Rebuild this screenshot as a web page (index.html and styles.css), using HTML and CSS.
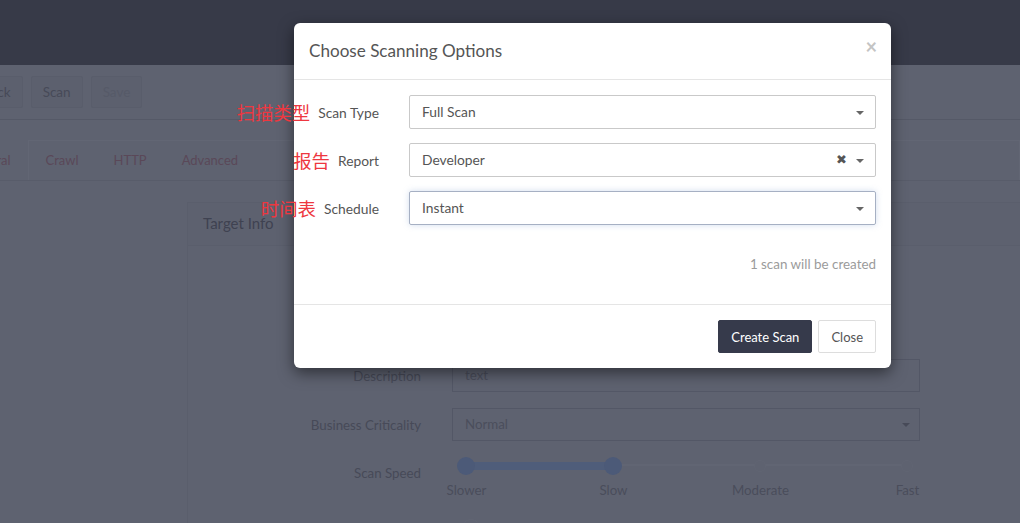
FILE: index.html
```html
<!DOCTYPE html>
<html>
<head>
<meta charset="utf-8">
<link rel="stylesheet" href="styles.css">
</head>
<body>
<div class="page">
  <header class="topbar"></header>
  <div class="toolbar">
    <button class="tb-btn back">Back</button>
    <button class="tb-btn">Scan</button>
    <button class="tb-btn muted">Save</button>
  </div>
  <div class="tabs-row">
    <span class="tab first">General</span>
    <div class="tabs-box">
      <span class="tab">Crawl</span>
      <span class="tab">HTTP</span>
      <span class="tab">Advanced</span>
    </div>
  </div>
  <div class="content">
    <div class="panel">
      <div class="panel-head">Target Info</div>
      <div class="panel-body">
        <div class="frow">
          <label class="flabel">Description</label>
          <div class="finput">text</div>
        </div>
        <div class="frow">
          <label class="flabel">Business Criticality</label>
          <div class="finput fselect">Normal<span class="caret dim"></span></div>
        </div>
        <div class="frow top">
          <label class="flabel pad">Scan Speed</label>
          <div class="slider">
            <div class="track">
              <div class="track-line"></div>
              <div class="track-fill"></div>
              <span class="knob k1"></span>
              <span class="knob k2"></span>
              <span class="tick t3"></span>
              <span class="tick t4"></span>
            </div>
            <div class="slider-labels">
              <span>Slower</span><span>Slow</span><span>Moderate</span><span>Fast</span>
            </div>
          </div>
        </div>
        <div class="frow">
          <label class="flabel"></label>
          <div class="toggle"></div>
        </div>
      </div>
    </div>
  </div>
</div>

<div class="modal">
  <div class="modal-head">
    <span class="modal-title">Choose Scanning Options</span>
    <span class="modal-close">×</span>
  </div>
  <div class="modal-body">
    <div class="mrow">
      <label class="mlabel"><span class="note">扫描类型</span>Scan Type</label>
      <div class="select">Full Scan<span class="caret"></span></div>
    </div>
    <div class="mrow">
      <label class="mlabel"><span class="note">报告</span>Report</label>
      <div class="select">Developer<span class="clear">✖</span><span class="caret"></span></div>
    </div>
    <div class="mrow">
      <label class="mlabel"><span class="note">时间表</span>Schedule</label>
      <div class="select focus">Instant<span class="caret"></span></div>
    </div>
    <div class="info">1 scan will be created</div>
  </div>
  <div class="modal-foot">
    <button class="btn primary">Create Scan</button>
    <button class="btn plain">Close</button>
  </div>
</div>
</body>
</html>
```

FILE: styles.css
```css
* { box-sizing: border-box; }
html, body { margin: 0; padding: 0; }
body {
  width: 1020px;
  height: 523px;
  overflow: hidden;
  background: #5e6270;
  font-family: Lato, "Noto Sans CJK SC", sans-serif;
  font-size: 13px;
  position: relative;
}
.page { width: 1020px; }
.topbar { height: 65px; background: #373a48; }

.toolbar {
  height: 55px;
  display: flex;
  align-items: center;
  gap: 8px;
  border-bottom: 1px solid #555967;
  padding-bottom: 1px;
}
.tb-btn {
  height: 32px;
  padding: 0 11px;
  background: #5c606e;
  border: 1px solid #595d6b;
  border-radius: 2px;
  color: #474a58;
  font-family: Lato, sans-serif;
  font-size: 13.5px;
}
.tb-btn.back { margin-left: -30px; }
.tb-btn.muted { color: #565a68; }

.tabs-row {
  height: 61px;
  display: flex;
  align-items: flex-end;
  border-bottom: 1px solid #585c6a;
}
.tab {
  display: inline-block;
  height: 40px;
  line-height: 40px;
  padding: 0 17px;
  color: #5a4858;
  font-size: 13px;
}
.tab.first { margin-left: -51px; }
.tabs-box {
  display: flex;
  border-color: #626674;
  border-style: solid;
  border-width: 1px 1px 0 1px;
  flex: 1;
  height: 40px;
}
.tabs-box .tab { height: 39px; line-height: 39px; }
.tabs-box .tab + .tab { margin-left: 1px; }

.content { padding: 21px 0 0 187px; }
.panel {
  width: 880px;
  border: 1px solid #5a5e6c;
}
.panel-head {
  height: 43px;
  line-height: 41px;
  padding: 0 15px;
  font-size: 15px;
  color: #3f4251;
  border-bottom: 1px solid #5a5e6c;
  background: #5d616f;
}
.panel-body { padding-top: 113px; }
.frow {
  display: grid;
  grid-template-columns: 233px 468px;
  column-gap: 31px;
  align-items: center;
  margin-bottom: 16px;
}
.frow.top { align-items: start; margin-bottom: 21px; }
.flabel { text-align: right; color: #474a58; font-size: 13.3px; }
.flabel.pad { padding-top: 8px; line-height: 16px; }
.finput {
  height: 33px;
  line-height: 31px;
  border: 1px solid #535766;
  padding: 0 12px;
  color: #4b4e5c;
  font-size: 13.3px;
  position: relative;
}
.caret {
  position: absolute;
  right: 9px;
  top: 14px;
  width: 0; height: 0;
  border-left: 4px solid transparent;
  border-right: 4px solid transparent;
  border-top: 4px solid #666;
}
.caret.dim { border-top-color: #474a58; }

.slider { width: 468px; }
.track { position: relative; height: 18px; }
.track-line {
  position: absolute;
  left: 14px; right: 13px; top: 7px;
  height: 2px;
  background: #616573;
}
.track-fill {
  position: absolute;
  left: 14px; width: 147px; top: 5px;
  height: 8px;
  background: #4f5d7a;
}
.knob {
  position: absolute;
  top: 0;
  width: 18px; height: 18px;
  border-radius: 50%;
  background: #4c5a78;
}
.k1 { left: 5px; }
.k2 { left: 152px; }
.tick {
  position: absolute;
  top: 3px;
  width: 12px; height: 12px;
  border-radius: 50%;
  border: 1px solid #616573;
  background: #5e6270;
}
.t3 { left: 302px; }
.t4 { left: 449px; }
.slider-labels {
  display: grid;
  grid-template-columns: repeat(4, 147px);
  margin-left: -59px;
  margin-top: 7px;
  line-height: 16px;
  color: #4a4d5b;
  font-size: 13.3px;
  text-align: center;
}
.toggle {
  width: 20px; height: 20px;
  border-radius: 50%;
  margin-left: 9px;
  border: 1px solid #616573;
}

/* modal */
.modal {
  position: absolute;
  left: 294px;
  top: 23px;
  width: 597px;
  background: #fff;
  border-radius: 6px;
  box-shadow: 0 5px 15px rgba(0, 0, 0, 0.5);
}
.modal-head {
  height: 57px;
  padding: 15px 15px 0 15px;
  border-bottom: 1px solid #e5e5e5;
  display: flex;
  justify-content: space-between;
  align-items: flex-start;
}
.modal-title {
  font-size: 17.1px;
  line-height: 25px;
  color: #555;
}
.modal-close {
  font-size: 20px;
  font-weight: bold;
  line-height: 20px;
  color: #c4c4c4;
  margin-top: -2px;
  margin-right: -1px;
}
.modal-body { padding: 15px 15px; }
.mrow {
  display: grid;
  grid-template-columns: 70px 1fr;
  column-gap: 30px;
  align-items: center;
  margin-bottom: 14px;
}
.mlabel {
  display: flex;
  justify-content: flex-end;
  align-items: center;
  white-space: nowrap;
  color: #555;
  font-size: 13.8px;
}
.note {
  font-family: "Noto Sans CJK SC", sans-serif;
  font-size: 18.4px;
  line-height: 20px;
  color: #ee3740;
  margin-right: 8px;
}
.select {
  position: relative;
  height: 34px;
  line-height: 32px;
  border: 1px solid #c9c9c9;
  border-radius: 2px;
  padding: 0 12px;
  color: #555;
  font-size: 13.8px;
}
.select .caret { right: 11px; top: 15px; border-top-color: #666; }
.select.focus {
  border-color: #a6b0c3;
  box-shadow: 0 0 6px rgba(130, 160, 210, 0.35);
}
.clear {
  position: absolute;
  right: 28px;
  top: 0;
  font-family: "DejaVu Sans", sans-serif;
  font-size: 13px;
  color: #555;
}
.info {
  margin: 30px 0 16px;
  line-height: 18px;
  text-align: right;
  color: #9b9b9b;
  font-size: 13.4px;
}
.modal-foot {
  border-top: 1px solid #e5e5e5;
  padding: 15px;
  display: flex;
  justify-content: flex-end;
  gap: 6px;
}
.btn {
  height: 33px;
  padding: 0 12px;
  font-family: Lato, sans-serif;
  font-size: 13px;
  border-radius: 2px;
}
.btn.primary { background: #363a4b; border: 1px solid #363a4b; color: #fff; }
.btn.plain { background: #fff; border: 1px solid #ddd; color: #555; }
```
